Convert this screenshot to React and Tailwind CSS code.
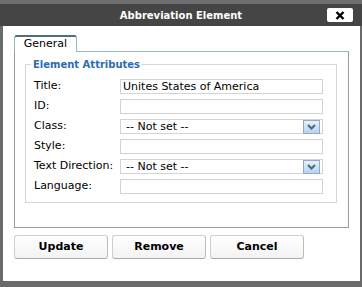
import React from 'react';

const font = { fontFamily: '"DejaVu Sans", Verdana, sans-serif' };

const TextInput = ({ value }) => (
  <div className="h-[15px] border border-[#d4d4d4] bg-white px-[2px] text-[11px] leading-[13px] text-black whitespace-nowrap">
    {value}
  </div>
);

const SelectInput = ({ value }) => (
  <div className="h-[15px] border border-[#d4d4d4] bg-white pl-[5px] pr-[2px] flex items-center justify-between text-[11px] leading-[13px] text-black">
    <span>{value}</span>
    <span className="w-[17px] h-[14px] mt-[1px] border border-[#95a8cc] bg-gradient-to-b from-[#e8f0fc] to-[#b9d1f3] flex items-center justify-center">
      <svg width="9" height="6" viewBox="0 0 9 6">
        <path d="M1 1 L4.5 4.5 L8 1" stroke="#3f6e78" strokeWidth="2" fill="none" />
      </svg>
    </span>
  </div>
);

const rows = [
  { label: 'Title:', value: 'Unites States of America' },
  { label: 'ID:', value: '' },
  { label: 'Class:', value: '-- Not set --', select: true },
  { label: 'Style:', value: '' },
  { label: 'Text Direction:', value: '-- Not set --', select: true },
  { label: 'Language:', value: '' },
];

const Btn = ({ children }) => (
  <button className="w-[94px] h-[24px] rounded-[3px] border border-[#cfcfcf] border-b-[#a9a9a9] border-r-[#bdbdbd] bg-gradient-to-b from-white to-[#f3f3f3] text-[11px] font-bold text-black">
    {children}
  </button>
);

export default function App() {
  return (
    <div className="w-[362px] h-[287px] bg-[#6a6a6a] flex flex-col" style={font}>
      <div className="h-[4px] bg-[#6e6e6e]" />
      <div className="relative h-[22px] bg-[#454545] flex items-center justify-center">
        <span className="text-white text-[10px] font-bold">Abbreviation Element</span>
        <button className="absolute right-[9px] top-[4px] w-[26px] h-[14px] bg-white rounded-[2px] flex items-center justify-center">
          <svg width="10" height="9" viewBox="0 0 10 9">
            <path d="M1.5 1 L8.5 8 M8.5 1 L1.5 8" stroke="#000" strokeWidth="2.4" />
          </svg>
        </button>
      </div>
      <div className="mx-[3px] mr-[2px] h-[255px] bg-white pt-[9px] pl-[11px] pr-[11px]">
        <div className="flex">
          <div className="w-[63px] h-[17px] rounded-t-[3px] border-t-2 border-x border-t-[#4d6f80] border-x-[#8fbcbc] flex items-center justify-center text-[11px] text-black">
            General
          </div>
          <div className="flex-1 border-b border-[#8fbcbc]" />
        </div>
        <div className="h-[176px] border border-t-0 border-[#9a9a9a] pt-[6px] pl-[10px] pr-[11px]">
          <fieldset className="border border-[#d6d6d6] pl-[8px] pr-[13px] pt-[8px] pb-[8px]">
            <legend className="-ml-[3px] px-[2px] text-[10px] leading-[13px] font-bold text-[#2c6cb0]">Element Attributes</legend>
            <div className="grid grid-cols-[86px_1fr] gap-y-[5px]">
              {rows.map((r) => (
                <React.Fragment key={r.label}>
                  <div className="h-[15px] flex items-center text-[11px] text-black">{r.label}</div>
                  {r.select ? <SelectInput value={r.value} /> : <TextInput value={r.value} />}
                </React.Fragment>
              ))}
            </div>
          </fieldset>
        </div>
        <div className="flex gap-[4px] mt-[7px]">
          <Btn>Update</Btn>
          <Btn>Remove</Btn>
          <Btn>Cancel</Btn>
        </div>
      </div>
    </div>
  );
}
